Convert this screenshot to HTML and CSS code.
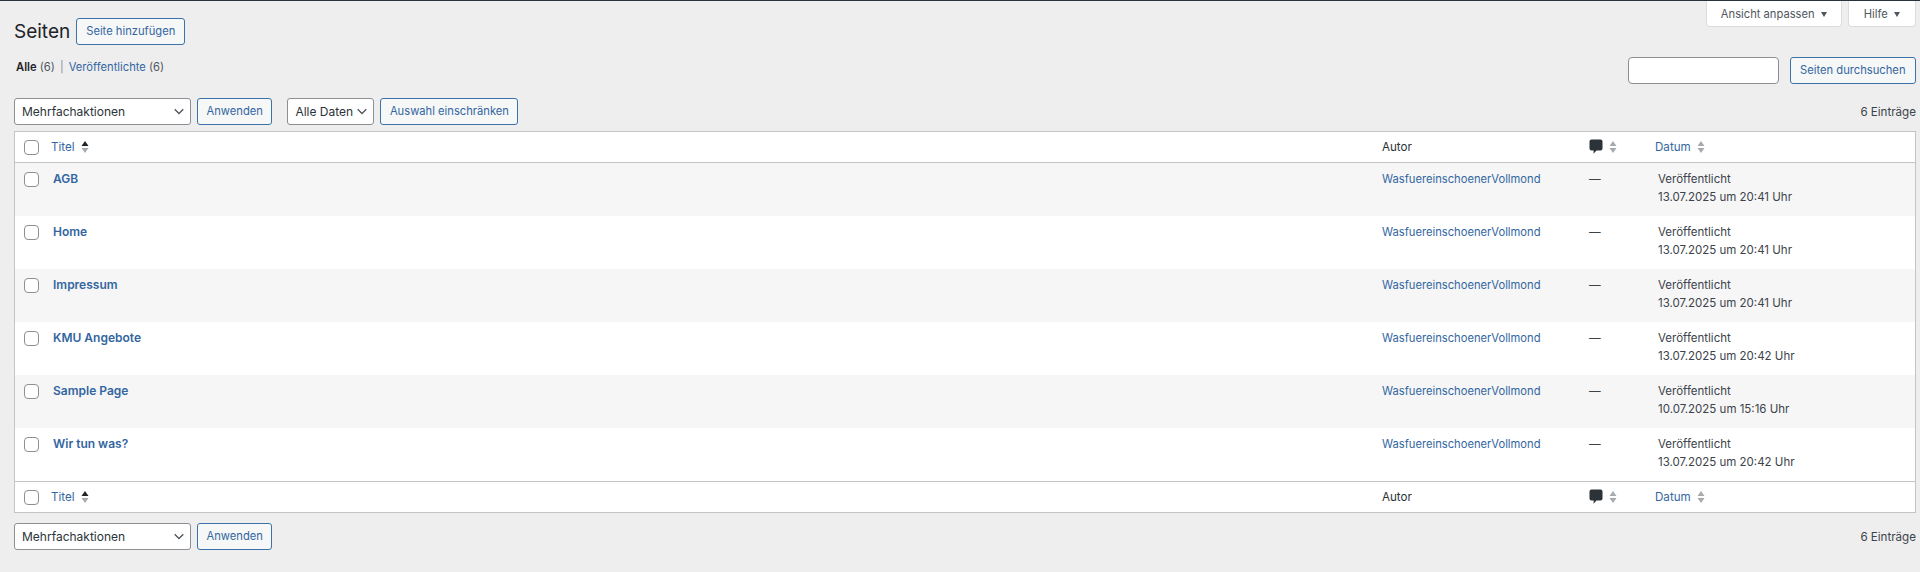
FILE: index.html
```html
<!DOCTYPE html>
<html lang="de">
<head>
<meta charset="utf-8">
<title>Seiten</title>
<link rel="stylesheet" href="styles.css">
</head>
<body>
<svg class="defs" width="0" height="0" aria-hidden="true">
  <symbol id="sort" viewBox="0 0 10 16"><path class="up" d="M5 2 8.500 7h-7z"/><path class="down" d="M1.500 9h7L5 14z"/></symbol>
  <symbol id="comment" viewBox="0 0 14 15"><path d="M2.500 0.500h9a2 2 0 0 1 2 2v7a2 2 0 0 1-2 2H7.500L4.500 14.800l.2-3.300H2.500a2 2 0 0 1-2-2v-7a2 2 0 0 1 2-2z"/></symbol>
</svg>
<div class="wrap">
  <header class="head">
    <h1>Seiten</h1>
    <button class="btn add">Seite hinzufügen</button>
    <div class="meta">
      <button class="tab">Ansicht anpassen <i class="caret"></i></button>
      <button class="tab help">Hilfe <i class="caret"></i></button>
    </div>
  </header>
  <div class="filters">
    <ul class="subsub">
      <li><b>Alle</b> <span>(6)</span></li>
      <li class="sep">|</li>
      <li><a href="#">Veröffentlichte</a> <span>(6)</span></li>
    </ul>
    <div class="search"><input type="text" aria-label="Seiten durchsuchen"><button class="btn">Seiten durchsuchen</button></div>
  </div>
  <div class="toolbar">
    <select class="sel bulk"><option>Mehrfachaktionen</option></select>
    <button class="btn">Anwenden</button>
    <select class="sel dates"><option>Alle Daten</option></select>
    <button class="btn">Auswahl einschränken</button>
    <span class="count">6 Einträge</span>
  </div>
  <table class="list">
    <colgroup><col class="c-check"><col class="c-title"><col class="c-author"><col class="c-comments"><col class="c-date"></colgroup>
    <thead>
      <tr>
        <td><input type="checkbox" class="cb"></td>
        <th class="t-title"><a href="#">Titel</a><svg class="sorter active"><use href="#sort"/></svg></th>
        <th class="plain">Autor</th>
        <th><svg class="bubble"><use href="#comment"/></svg><svg class="sorter"><use href="#sort"/></svg></th>
        <th class="t-date"><a href="#">Datum</a><svg class="sorter"><use href="#sort"/></svg></th>
      </tr>
    </thead>
    <tbody>
      <tr><td><input type="checkbox" class="cb"></td><td class="name"><a href="#">AGB</a></td><td class="author"><a href="#">WasfuereinschoenerVollmond</a></td><td>—</td><td class="date">Veröffentlicht<br>13.07.2025 um 20:41 Uhr</td></tr>
      <tr><td><input type="checkbox" class="cb"></td><td class="name"><a href="#">Home</a></td><td class="author"><a href="#">WasfuereinschoenerVollmond</a></td><td>—</td><td class="date">Veröffentlicht<br>13.07.2025 um 20:41 Uhr</td></tr>
      <tr><td><input type="checkbox" class="cb"></td><td class="name"><a href="#">Impressum</a></td><td class="author"><a href="#">WasfuereinschoenerVollmond</a></td><td>—</td><td class="date">Veröffentlicht<br>13.07.2025 um 20:41 Uhr</td></tr>
      <tr><td><input type="checkbox" class="cb"></td><td class="name"><a href="#">KMU Angebote</a></td><td class="author"><a href="#">WasfuereinschoenerVollmond</a></td><td>—</td><td class="date">Veröffentlicht<br>13.07.2025 um 20:42 Uhr</td></tr>
      <tr><td><input type="checkbox" class="cb"></td><td class="name"><a href="#">Sample Page</a></td><td class="author"><a href="#">WasfuereinschoenerVollmond</a></td><td>—</td><td class="date">Veröffentlicht<br>10.07.2025 um 15:16 Uhr</td></tr>
      <tr><td><input type="checkbox" class="cb"></td><td class="name"><a href="#">Wir tun was?</a></td><td class="author"><a href="#">WasfuereinschoenerVollmond</a></td><td>—</td><td class="date">Veröffentlicht<br>13.07.2025 um 20:42 Uhr</td></tr>
    </tbody>
    <tfoot>
      <tr>
        <td><input type="checkbox" class="cb"></td>
        <th class="t-title"><a href="#">Titel</a><svg class="sorter active"><use href="#sort"/></svg></th>
        <th class="plain">Autor</th>
        <th><svg class="bubble"><use href="#comment"/></svg><svg class="sorter"><use href="#sort"/></svg></th>
        <th class="t-date"><a href="#">Datum</a><svg class="sorter"><use href="#sort"/></svg></th>
      </tr>
    </tfoot>
  </table>
  <div class="toolbar bottom">
    <select class="sel bulk"><option>Mehrfachaktionen</option></select>
    <button class="btn">Anwenden</button>
    <span class="count">6 Einträge</span>
  </div>
</div>
</body>
</html>
```
FILE: styles.css
```css
* { box-sizing: border-box; }
html, body { margin: 0; height: 100%; }
body {
  background: #eeeeef;
  border-top: 1px solid #2c3338;
  font-family: Inter, "Liberation Sans", sans-serif;
  font-size: 11.6px;
  line-height: 18px;
  color: #3c434a;
  overflow: hidden;
}
.defs { position: absolute; }
a { color: #33669f; text-decoration: none; }
.wrap { padding: 0 4px 0 14px; }

.head { display: flex; align-items: flex-start; height: 48px; }
h1 { margin: 16px 6px 0 0; font-size: 19px; font-weight: 400; line-height: 30px; color: #1d2327; }
.btn {
  height: 27px;
  padding: 0 8.500px;
  border: 1px solid #3c72aa;
  border-radius: 3px;
  background: #f6f7f7;
  color: #33669f;
  font: 11.2px/25px Inter, "Liberation Sans", sans-serif;
  white-space: nowrap;
}
.add { margin-top: 17px; padding: 0 9px; }
.search .btn { padding: 0 9.500px; }
.meta { display: flex; gap: 6px; margin-left: auto; }
.tab {
  height: 26px;
  padding: 0 14px;
  border: 1px solid #dcdcde;
  border-top: 0;
  border-radius: 0 0 4px 4px;
  background: #fff;
  color: #50575e;
  font: 11.2px/24px Inter, "Liberation Sans", sans-serif;
  white-space: nowrap;
}
.help { padding: 0 15px; }
.caret {
  display: inline-block;
  width: 0;
  height: 0;
  margin-left: 3px;
  vertical-align: 1px;
  border-left: 3.500px solid transparent;
  border-right: 3.500px solid transparent;
  border-top: 5px solid #50575e;
}

.filters { display: flex; justify-content: space-between; height: 49px; }
.subsub { display: flex; gap: 5px; margin: 9px 0 0 2px; padding: 0; list-style: none; font-size: 11.2px; }
.subsub b { color: #1d2327; font-weight: 600; }
.subsub span { color: #50575e; }
.sep { color: #8c8f94; }
.search { display: flex; gap: 11px; margin-top: 8px; }
.search input {
  width: 151px;
  height: 27px;
  border: 1px solid #8c8f94;
  border-radius: 4px;
  background: #fff;
}

.toolbar { display: flex; align-items: center; gap: 6px; height: 27px; }
.sel {
  height: 27px;
  padding: 0 18px 0 7px;
  border: 1px solid #8c8f94;
  border-radius: 3px;
  background: #fff url("data:image/svg+xml,%3Csvg xmlns='http://www.w3.org/2000/svg' width='10' height='7'%3E%3Cpath d='M.7 1.200 5 5.500l4.300-4.300' fill='none' stroke='%2350575e' stroke-width='1.300'/%3E%3C/svg%3E") no-repeat right 6px center;
  appearance: none;
  color: #2c3338;
  font: 12px/25px Inter, "Liberation Sans", sans-serif;
}
.bulk { width: 177px; }
.dates { width: 87px; margin-left: 9px; }
.count { margin-left: auto; color: #3c434a; }

.list {
  width: 100%;
  margin-top: 6px;
  table-layout: fixed;
  border-collapse: separate;
  border-spacing: 0;
  border: 1px solid #c3c4c7;
  background: #fff;
}
.c-check { width: 28px; }
.c-title { width: auto; }
.c-author { width: 207px; }
.c-comments { width: 76px; }
.c-date { width: 260px; }
.list td, .list th { padding: 0 0 0 10px; text-align: left; font-weight: 400; }
.list td:first-child { padding-left: 9px; }
thead td, thead th, tfoot td, tfoot th { height: 31px; vertical-align: middle; }
thead td, thead th { border-bottom: 1px solid #c3c4c7; padding-top: 1px; }
tfoot td, tfoot th { border-top: 1px solid #c3c4c7; }
.plain { color: #2c3338; }
.list .t-title { padding-left: 8px; }
.list .t-date { padding-left: 0; }
tbody tr { height: 53px; }
.list tbody td { vertical-align: top; padding-top: 7px; }
tbody tr:nth-child(odd) { background: #f6f6f7; }
.list .name { font-size: 12px; padding-left: 10px; }
.name a { font-weight: 600; }
.author { font-size: 11.2px; }
.list .date { padding-left: 3px; font-size: 11.5px; }

.cb {
  appearance: none;
  display: block;
  width: 15px;
  height: 15px;
  margin: 0;
  border: 1px solid #8c8f94;
  border-radius: 4px;
  background: #fff;
}
tbody .cb { margin-top: 2px; }
.sorter { width: 10px; height: 16px; margin-left: 5px; vertical-align: -4px; fill: #a7aaad; }
.up { fill: var(--up, #a7aaad); }
.active { --up: #1d2327; }
.bubble { width: 14px; height: 15px; vertical-align: -3px; fill: #2c3338; }
.bottom { margin-top: 10px; }
```
